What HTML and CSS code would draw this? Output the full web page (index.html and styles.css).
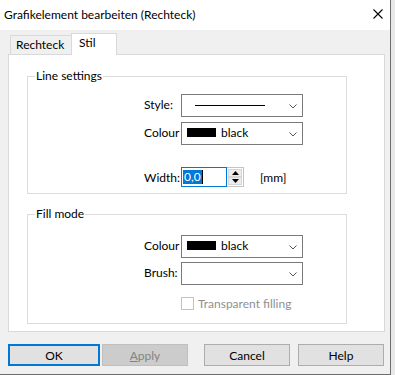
FILE: index.html
```html
<html>
<head>
    <title>Grafikelement bearbeiten</title>
    <link rel="stylesheet" href="styles.css">
</head>
<body>
    <div class="window">
        <div class="titlebar">
            <span class="title">Grafikelement bearbeiten (Rechteck)</span>
            <svg class="close" width="10" height="10" viewBox="0 0 10 10">
                <path d="M0.5 0.5 L9.5 9.5 M9.5 0.5 L0.5 9.5" stroke="#000" stroke-width="1.1" fill="none"/>
            </svg>
        </div>
        <div class="content">
            <div class="tabs">
                <div class="tab">Rechteck</div>
                <div class="tab active">Stil</div>
            </div>
            <div class="panel">
                <fieldset class="group line-group">
                    <legend>Line settings</legend>
                    <div class="row">
                        <label>Style:</label>
                        <div class="combo">
                            <span class="line-sample"></span>
                            <svg class="chevron" width="8" height="5" viewBox="0 0 8 5"><polyline points="0.5,0.5 4,4 7.5,0.5" stroke="#555" fill="none"/></svg>
                        </div>
                    </div>
                    <div class="row">
                        <label>Colour</label>
                        <div class="combo">
                            <span class="swatch"></span><span class="value">black</span>
                            <svg class="chevron" width="8" height="5" viewBox="0 0 8 5"><polyline points="0.5,0.5 4,4 7.5,0.5" stroke="#555" fill="none"/></svg>
                        </div>
                    </div>
                    <div class="row width-row">
                        <label>Width:</label>
                        <div class="spin">
                            <div class="spin-input"><span class="selected">0,0</span><span class="caret"></span></div>
                            <div class="spin-buttons">
                                <div class="spin-btn"><svg width="7" height="4" viewBox="0 0 7 4"><polygon points="0,4 3.5,0 7,4" fill="#000"/></svg></div>
                                <div class="spin-btn"><svg width="7" height="4" viewBox="0 0 7 4"><polygon points="0,0 7,0 3.5,4" fill="#000"/></svg></div>
                            </div>
                        </div>
                        <span class="unit">[mm]</span>
                    </div>
                </fieldset>

                <fieldset class="group fill-group">
                    <legend>Fill mode</legend>
                    <div class="row">
                        <label>Colour</label>
                        <div class="combo">
                            <span class="swatch"></span><span class="value">black</span>
                            <svg class="chevron" width="8" height="5" viewBox="0 0 8 5"><polyline points="0.5,0.5 4,4 7.5,0.5" stroke="#555" fill="none"/></svg>
                        </div>
                    </div>
                    <div class="row">
                        <label>Brush:</label>
                        <div class="combo">
                            <svg class="chevron" width="8" height="5" viewBox="0 0 8 5"><polyline points="0.5,0.5 4,4 7.5,0.5" stroke="#555" fill="none"/></svg>
                        </div>
                    </div>
                    <div class="row check-row">
                        <span class="checkbox"></span>
                        <span class="check-label">Transparent filling</span>
                    </div>
                </fieldset>
            </div>

            <div class="buttons">
                <div class="btn btn-ok">OK</div>
                <div class="btn btn-apply"><u>A</u>pply</div>
                <div class="btn btn-cancel">Cancel</div>
                <div class="btn btn-help">Help</div>
            </div>
        </div>
    </div>
</body>
</html>
```

FILE: styles.css
```css
*{
    margin: 0;
    box-sizing: border-box;
}
body{
    background-color: #e8e8e8;
    font-family: Lato, "Liberation Sans", sans-serif;
    font-size: 12px;
    color: #000;
    width: 395px;
    height: 375px;
    overflow: hidden;
}
.window{
    width: 391px;
    height: 375px;
    background-color: #f0f0f0;
    border-right: 1px solid #6e6e6e;
    border-bottom: 1px solid #6e6e6e;
}
.titlebar{
    height: 30px;
    background-color: #fff;
    display: flex;
    align-items: center;
    justify-content: space-between;
    padding-left: 4px;
    padding-right: 7px;
}
.title{
    font-size: 12px;
    margin-top: -2px;
}
.close{
    margin-top: -3px;
}
.content{
    padding-left: 8px;
    padding-right: 5px;
}

/* tabs */
.tabs{
    display: flex;
    align-items: flex-start;
    padding-left: 2px;
    margin-top: 3px;
    height: 22px;
    margin-bottom: -1px;
    position: relative;
    z-index: 1;
}
.tab{
    height: 19px;
    margin-top: 2px;
    padding: 1px 5px 0 5px;
    width: 62px;
    border: 1px solid #d9d9d9;
    border-bottom: none;
    background-color: #f0f0f0;
    line-height: 16px;
}
.tab.active{
    height: 22px;
    margin-top: 0;
    margin-left: -1px;
    width: 46px;
    padding: 1px 7px 0 7px;
    background-color: #fff;
}
.panel{
    height: 278px;
    background-color: #fff;
    border: 1px solid #d9d9d9;
    padding: 14px 37px 0 18px;
}

/* group boxes */
.group{
    border: 1px solid #dcdcdc;
    margin: 0;
    padding: 0 0 6px 0;
    min-width: 0;
}
.group legend{
    margin-left: 7px;
    padding: 0 1px;
    line-height: 14px;
}
.fill-group{
    margin-top: 13px;
    padding-bottom: 13px;
}
.row{
    display: flex;
    align-items: center;
    height: 23px;
    margin-top: 5px;
    padding-left: 116px;
}
.line-group .row:first-of-type{
    margin-top: 11px;
}
.fill-group .row:first-of-type{
    margin-top: 14px;
}
.fill-group .row{
    margin-top: 4px;
}
.row label{
    width: 37px;
    margin-top: -2px;
    white-space: nowrap;
}
.width-row{
    height: 20px;
    margin-top: 22px;
}
.width-row label{
    margin-top: 0;
}
.combo{
    width: 122px;
    height: 23px;
    border: 1px solid #7a7a7a;
    background-color: #fff;
    display: flex;
    align-items: center;
    padding-left: 5px;
    padding-right: 5px;
}
.chevron{
    margin-left: auto;
    margin-top: 1px;
}
.line-sample{
    width: 70px;
    height: 1px;
    background-color: #000;
    margin-left: 8px;
}
.swatch{
    width: 29px;
    height: 9px;
    background-color: #000;
    margin-top: -2px;
}
.value{
    margin-left: 5px;
    margin-top: -3px;
}

/* spin edit */
.spin{
    display: flex;
    height: 20px;
}
.spin-input{
    width: 46px;
    height: 20px;
    border: 1px solid #0078d7;
    background-color: #fff;
    padding: 2px 0 0 1px;
    display: flex;
}
.selected{
    background-color: #0078d7;
    color: #fff;
    height: 14px;
    line-height: 14px;
    padding: 0 1px;
}
.caret{
    width: 1px;
    height: 14px;
    background-color: #000;
}
.spin-buttons{
    width: 17px;
    display: flex;
    flex-direction: column;
    border: 1px solid #c4c4c4;
    border-left: none;
    padding: 1px;
    background-color: #fff;
}
.spin-btn{
    flex: 1;
    background-color: #ececec;
    border: 1px solid #d6d6d6;
    display: flex;
    align-items: center;
    justify-content: center;
}
.unit{
    margin-left: 16px;
}

/* checkbox */
.check-row{
    height: 13px;
    padding-left: 153px;
}
.fill-group .check-row{
    margin-top: 12px;
}
.checkbox{
    width: 13px;
    height: 13px;
    border: 1px solid #c2c2c2;
    background-color: #fff;
}
.check-label{
    color: #8f8f8f;
    margin-left: 4px;
}

/* buttons */
.buttons{
    display: flex;
    margin-top: 12px;
}
.btn{
    height: 22px;
    width: 86px;
    border: 1px solid #adadad;
    background-color: #e1e1e1;
    display: flex;
    align-items: center;
    justify-content: center;
}
.btn-ok{
    width: 92px;
    border: 2px solid #0078d7;
}
.btn-apply{
    margin-left: 2px;
    background-color: #cccccc;
    border-color: #bfbfbf;
    color: #838383;
}
.btn-cancel{
    margin-left: 16px;
}
.btn-help{
    margin-left: 8px;
}
```
